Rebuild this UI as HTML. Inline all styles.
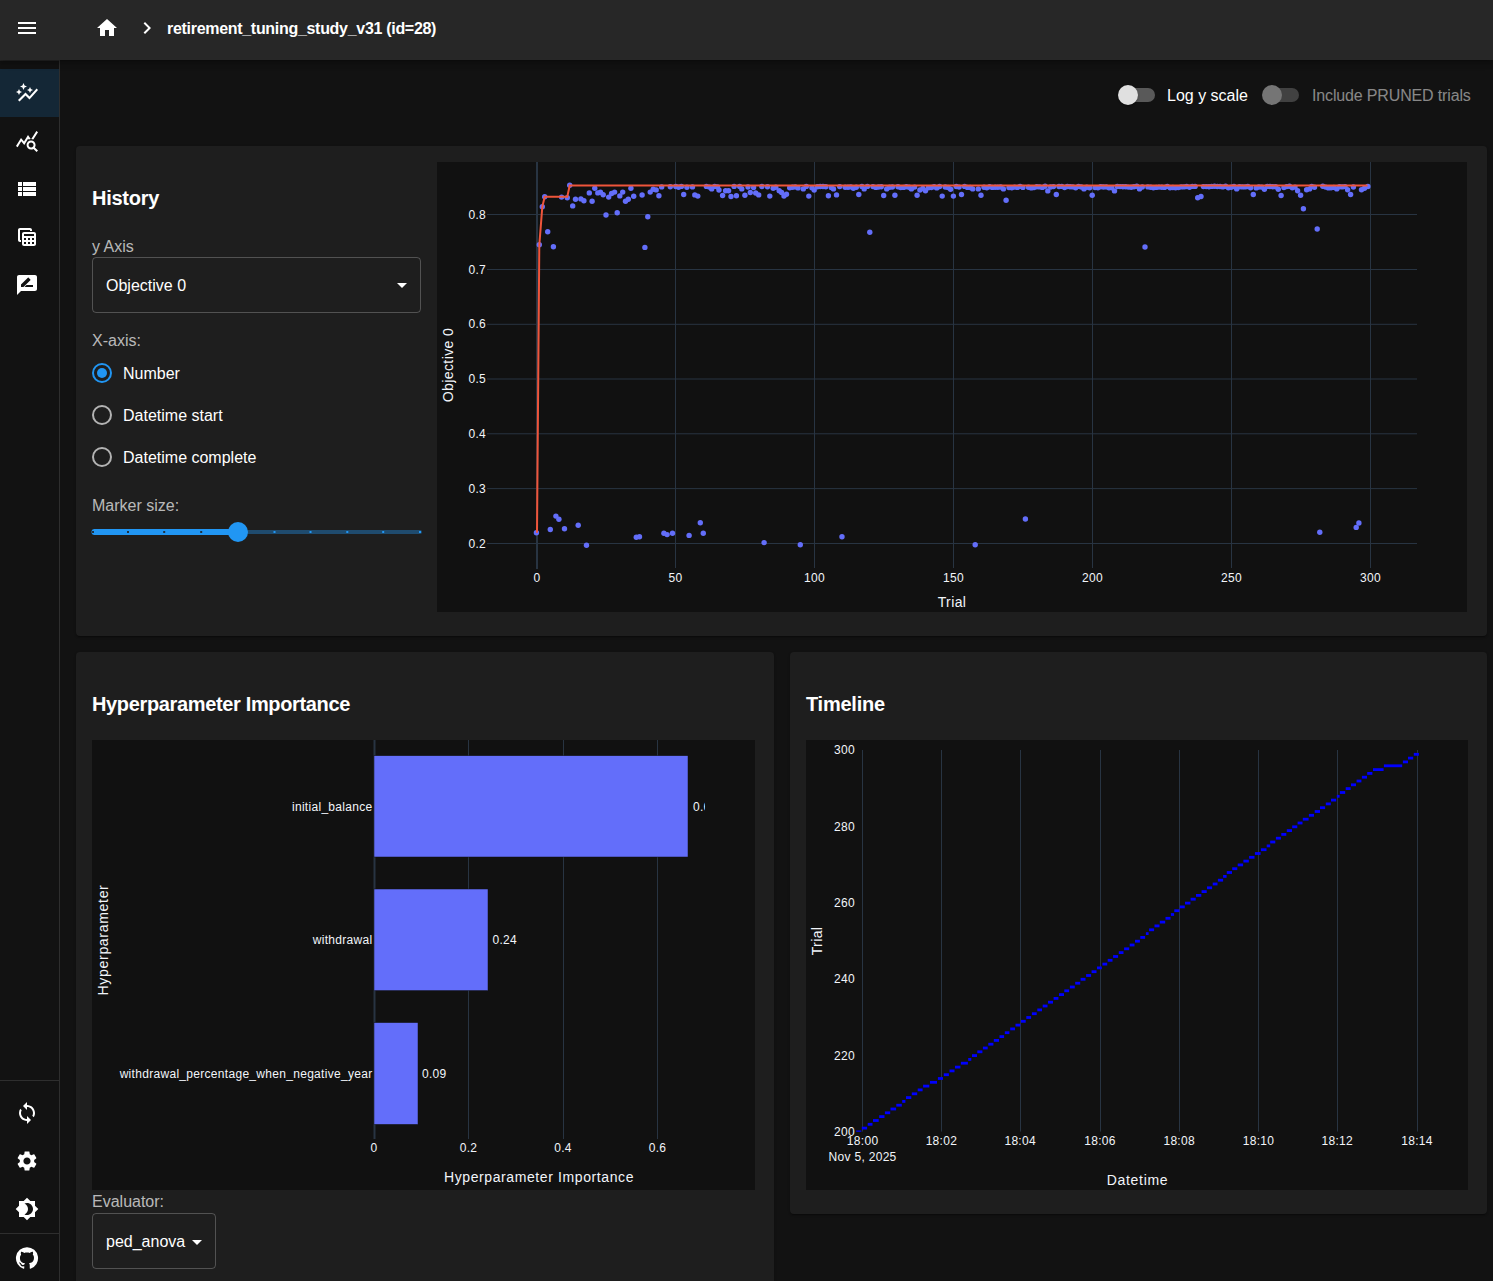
<!DOCTYPE html>
<html><head><meta charset="utf-8">
<style>
*{box-sizing:border-box}
html,body{margin:0;padding:0;width:1493px;height:1281px;overflow:hidden;background:#121212;font-family:"Liberation Sans",sans-serif;color:#fff}
.abs{position:absolute}
.appbar{position:absolute;left:0;top:0;width:1493px;height:60px;background:#272727;box-shadow:0 2px 4px -1px rgba(0,0,0,.2),0 4px 5px 0 rgba(0,0,0,.14),0 1px 10px 0 rgba(0,0,0,.12);z-index:3}
.drawer{position:absolute;left:0;top:60px;width:60px;height:1221px;background:#121212;border-right:1px solid rgba(255,255,255,0.12)}
.icon{position:absolute;width:24px;height:24px;fill:#fff}
.card{position:absolute;background:#1e1e1e;border-radius:4px;box-shadow:0 2px 1px -1px rgba(0,0,0,.2),0 1px 1px 0 rgba(0,0,0,.14),0 1px 3px 0 rgba(0,0,0,.12)}
.h6{position:absolute;font-size:20px;font-weight:700;letter-spacing:-0.25px;white-space:nowrap;line-height:24px}
.lbl{position:absolute;font-size:16px;color:rgba(255,255,255,0.7);white-space:nowrap;line-height:20px}
.txt{position:absolute;font-size:16px;color:#fff;white-space:nowrap;line-height:20px}
svg text{font-family:"Liberation Sans",sans-serif}
</style></head><body>
<!-- App bar -->
<div class="appbar">
  <svg class="icon" style="left:15px;top:16px" viewBox="0 0 24 24"><path d="M3 18h18v-2H3v2zm0-5h18v-2H3v2zm0-7v2h18V6H3z"/></svg>
  <svg class="icon" style="left:95px;top:16px" viewBox="0 0 24 24"><path d="M10 20v-6h4v6h5v-8h3L12 3 2 12h3v8z"/></svg>
  <svg class="icon" style="left:135px;top:16px" viewBox="0 0 24 24"><path d="M10 6 8.59 7.41 13.17 12l-4.58 4.59L10 18l6-6z"/></svg>
  <div class="abs" style="left:167px;top:19px;font-size:16px;font-weight:700;letter-spacing:-0.3px;line-height:20px;white-space:nowrap">retirement_tuning_study_v31 (id=28)</div>
</div>
<!-- Drawer -->
<div class="drawer">
  <div class="abs" style="left:0;top:0;width:59px;height:1px;background:#262626"></div>
  <div class="abs" style="left:0;top:9px;width:59px;height:48px;background:rgba(33,150,243,0.16)"></div>
  <svg class="icon" style="left:15px;top:21px" viewBox="0 0 24 24"><path d="M14.06 9.94 12 9l2.06-.94L15 6l.94 2.06L18 9l-2.06.94L15 12zM4 14l.94-2.06L7 11l-2.06-.94L4 8l-.94 2.06L1 11l2.06.94zm4.5-5 1.09-2.41L12 5.5 9.59 4.41 8.5 2 7.41 4.41 5 5.5l2.41 1.09zm-4 11.5 6-6.01 4 4L23 8.93l-1.41-1.41-7.09 7.97-4-4L3 19z"/></svg>
  <svg class="icon" style="left:15px;top:69px" viewBox="0 0 24 24"><path d="M19.88 18.47c.44-.7.7-1.51.7-2.39 0-2.49-2.01-4.5-4.5-4.5s-4.5 2.01-4.5 4.5 2.01 4.5 4.49 4.5c.88 0 1.7-.26 2.39-.7L21.58 23 23 21.58l-3.12-3.11zm-3.8.11c-1.38 0-2.5-1.12-2.5-2.5s1.12-2.5 2.5-2.5 2.5 1.12 2.5 2.5-1.12 2.5-2.5 2.5zm-.36-8.5c-.74.02-1.45.18-2.1.45l-.55-.83-3.8 6.18-3.01-3.52-3.630 5.81L1 17l5-8 3 3.5L13 6l2.72 4.08zm2.59.5c-.64-.28-1.33-.45-2.05-.49L21.38 2 23 3.18l-4.69 7.4z"/></svg>
  <svg class="icon" style="left:15px;top:117px" viewBox="0 0 24 24"><path d="M3 14h4v-4H3v4zm0 5h4v-4H3v4zM3 9h4V5H3v4zm5 5h13v-4H8v4zm0 5h13v-4H8v4zM8 5v4h13V5H8z"/></svg>
  <svg class="icon" style="left:15px;top:165px" viewBox="0 0 24 24"><path d="M19 7H9c-1.1 0-2 .9-2 2v10c0 1.1.9 2 2 2h10c1.1 0 2-.9 2-2V9c0-1.1-.9-2-2-2zm0 2v2H9V9h10zm-6 6v-2h2v2h-2zm2 2v2h-2v-2h2zm-4-2H9v-2h2v2zm6-2h2v2h-2v-2zm-8 4h2v2H9v-2zm8 2v-2h2v2h-2zM6 17H5c-1.1 0-2-.9-2-2V5c0-1.1.9-2 2-2h10c1.1 0 2 .9 2 2v1h-2V5H5v10h1v2z"/></svg>
  <svg class="icon" style="left:15px;top:213px" viewBox="0 0 24 24"><path d="M20 2H4c-1.1 0-1.99.9-1.99 2L2 22l4-4h14c1.1 0 2-.9 2-2V4c0-1.1-.9-2-2-2zM6 14v-2.47l6.88-6.88c.2-.2.51-.2.71 0l1.77 1.77c.2.2.2.51 0 .71L8.47 14H6zm12 0h-8.5l2-2H18v2z"/></svg>
  <div class="abs" style="left:0;top:1020px;width:59px;height:1px;background:rgba(255,255,255,0.12)"></div>
  <svg class="icon" style="left:15px;top:1041px" viewBox="0 0 24 24"><path d="M12 4V1L8 5l4 4V6c3.31 0 6 2.69 6 6 0 1.01-.25 1.97-.7 2.8l1.46 1.46C19.54 15.03 20 13.57 20 12c0-4.42-3.580-8-8-8zm0 14c-3.31 0-6-2.69-6-6 0-1.01.25-1.97.7-2.8L5.24 7.74C4.46 8.97 4 10.43 4 12c0 4.42 3.58 8 8 8v3l4-4-4-4v3z"/></svg>
  <svg class="icon" style="left:15px;top:1089px" viewBox="0 0 24 24"><path d="M19.14 12.94c.04-.3.06-.61.06-.94 0-.32-.02-.64-.07-.94l2.03-1.58c.18-.14.23-.41.12-.61l-1.92-3.32c-.12-.22-.37-.29-.59-.22l-2.39.96c-.5-.38-1.03-.7-1.62-.94l-.36-2.54c-.04-.24-.24-.41-.48-.41h-3.84c-.24 0-.43.17-.47.41l-.36 2.54c-.59.24-1.13.57-1.62.94l-2.390-.96c-.22-.08-.47 0-.59.22L2.74 8.87c-.12.21-.08.47.12.61l2.03 1.58c-.05.3-.09.63-.09.94s.02.64.07.94l-2.03 1.58c-.18.14-.23.41-.12.61l1.92 3.32c.12.22.37.29.59.22l2.39-.96c.5.38 1.03.7 1.62.94l.36 2.54c.05.24.24.41.48.41h3.84c.24 0 .44-.17.47-.41l.36-2.54c.59-.24 1.13-.56 1.62-.94l2.39.96c.22.08.47 0 .59-.22l1.92-3.32c.12-.22.07-.47-.12-.61l-2.01-1.58zM12 15.6c-1.98 0-3.6-1.62-3.6-3.6s1.62-3.6 3.6-3.6 3.6 1.62 3.6 3.6-1.62 3.6-3.6 3.6z"/></svg>
  <svg class="icon" style="left:15px;top:1137px" viewBox="0 0 24 24"><path d="M20 8.69V4h-4.69L12 .69 8.69 4H4v4.69L.69 12 4 15.31V20h4.69L12 23.31 15.31 20H20v-4.69L23.31 12 20 8.69zM12 18c-.89 0-1.74-.2-2.5-.55C11.56 16.500 13 14.42 13 12s-1.44-4.5-3.5-5.45C10.26 6.2 11.11 6 12 6c3.31 0 6 2.690 6 6s-2.69 6-6 6z"/></svg>
  <div class="abs" style="left:0;top:1173px;width:59px;height:1px;background:rgba(255,255,255,0.12)"></div>
  <svg class="icon" style="left:15px;top:1186px" viewBox="0 0 24 24"><path d="M12 1.27a11 11 0 00-3.48 21.46c.55.09.73-.28.73-.55v-1.84c-3.03.64-3.67-1.46-3.67-1.46-.55-1.29-1.28-1.65-1.28-1.65-.92-.65.1-.65.1-.65 1.1 0 1.73 1.1 1.73 1.1.92 1.65 2.57 1.2 3.21.92a2 2 0 01.64-1.47c-2.47-.27-5.04-1.19-5.04-5.5 0-1.1.46-2.1 1.2-2.84a3.76 3.76 0 010-2.93s.91-.28 3.11 1.1c1.8-.49 3.7-.49 5.5 0 2.1-1.38 3.02-1.1 3.02-1.1a3.76 3.76 0 010 2.93c.83.74 1.2 1.74 1.2 2.94 0 4.21-2.57 5.130-5.04 5.4.45.37.82.92.82 2.02v3.03c0 .27.1.64.73.55A11 11 0 0012 1.27"/></svg>
</div>

<!-- toggles -->
<div class="abs" style="left:1121px;top:88px;width:34px;height:14px;border-radius:7px;background:rgba(255,255,255,0.3)"></div>
<div class="abs" style="left:1118px;top:85px;width:20px;height:20px;border-radius:50%;background:#e0e0e0;box-shadow:0 2px 1px -1px rgba(0,0,0,.2),0 1px 1px 0 rgba(0,0,0,.14),0 1px 3px 0 rgba(0,0,0,.12)"></div>
<div class="txt" style="left:1167px;top:86px">Log y scale</div>
<div class="abs" style="left:1265px;top:88px;width:34px;height:14px;border-radius:7px;background:rgba(255,255,255,0.2)"></div>
<div class="abs" style="left:1262px;top:85px;width:20px;height:20px;border-radius:50%;background:#757575"></div>
<div class="txt" style="left:1312px;top:86px;letter-spacing:-0.15px;color:rgba(255,255,255,0.5)">Include PRUNED trials</div>

<!-- History card -->
<div class="card" style="left:76px;top:146px;width:1411px;height:490px"></div>
<div class="h6" style="left:92px;top:186px">History</div>
<div class="lbl" style="left:92px;top:237px">y Axis</div>
<div class="abs" style="left:92px;top:257px;width:329px;height:56px;border:1px solid rgba(255,255,255,0.23);border-radius:4px"></div>
<div class="txt" style="left:106px;top:276px">Objective 0</div>
<svg class="icon" style="left:390px;top:273px" viewBox="0 0 24 24"><path d="M7 10l5 5 5-5z"/></svg>
<div class="lbl" style="left:92px;top:331px">X-axis:</div>
<!-- radios -->
<svg class="abs" style="left:90px;top:361px" width="24" height="24" viewBox="0 0 24 24"><circle cx="12" cy="12" r="9" fill="none" stroke="#2196f3" stroke-width="2"/><circle cx="12" cy="12" r="5" fill="#2196f3"/></svg>
<div class="txt" style="left:123px;top:364px">Number</div>
<svg class="abs" style="left:90px;top:403px" width="24" height="24" viewBox="0 0 24 24"><circle cx="12" cy="12" r="9" fill="none" stroke="#b3b3b3" stroke-width="2"/></svg>
<div class="txt" style="left:123px;top:406px">Datetime start</div>
<svg class="abs" style="left:90px;top:445px" width="24" height="24" viewBox="0 0 24 24"><circle cx="12" cy="12" r="9" fill="none" stroke="#b3b3b3" stroke-width="2"/></svg>
<div class="txt" style="left:123px;top:448px">Datetime complete</div>
<div class="lbl" style="left:92px;top:496px">Marker size:</div>
<!-- slider -->
<svg class="abs" style="left:88px;top:520px" width="340" height="24">
  <rect x="4" y="10" width="330" height="4" rx="2" fill="#2196f3" fill-opacity="0.38"/>
  <rect x="3.5" y="9" width="147" height="6" rx="3" fill="#2196f3"/>
  <g fill="#1e1e1e" fill-opacity="0.85"><rect x="39" y="11" width="2" height="2"/><rect x="75.2" y="11" width="2" height="2"/><rect x="112.2" y="11" width="2" height="2"/><rect x="4" y="11" width="2" height="2"/></g>
  <g fill="#2196f3"><rect x="185.5" y="11" width="2" height="2"/><rect x="221.5" y="11" width="2" height="2"/><rect x="258.3" y="11" width="2" height="2"/><rect x="294.2" y="11" width="2" height="2"/><rect x="331" y="11" width="2" height="2"/></g>
  <circle cx="150" cy="12" r="10" fill="#2196f3"/>
</svg>
<!-- History plot -->
<svg class="abs" style="left:0;top:0" width="1493" height="1281">
  <rect x="437" y="162" width="1030" height="450" fill="#111111"/>
  <g stroke="#283442" stroke-width="1" fill="none">
    <path d="M487 214.5H1417M487 269.5H1417M487 324.3H1417M487 379H1417M487 433.8H1417M487 488.6H1417M487 543.5H1417"/>
    <path d="M675.5 162V568M814.5 162V568M953.5 162V568M1092.5 162V568M1231.5 162V568M1370.5 162V568"/>
  </g>
  <path d="M537 162V569" stroke="#283442" stroke-width="2"/>
  <g fill="#636efa"><circle cx="536.4" cy="532.7" r="2.7"/><circle cx="539.3" cy="244.8" r="2.7"/><circle cx="542.3" cy="206.8" r="2.7"/><circle cx="544.7" cy="196.8" r="2.7"/><circle cx="547.7" cy="231.7" r="2.7"/><circle cx="550.3" cy="529.5" r="2.7"/><circle cx="553.4" cy="246.7" r="2.7"/><circle cx="555.9" cy="516.1" r="2.7"/><circle cx="558.9" cy="519.3" r="2.7"/><circle cx="561.6" cy="197.1" r="2.7"/><circle cx="564.5" cy="528.7" r="2.7"/><circle cx="567.3" cy="197.7" r="2.7"/><circle cx="569.7" cy="185.3" r="2.7"/><circle cx="572.7" cy="205.9" r="2.7"/><circle cx="575.5" cy="199.3" r="2.7"/><circle cx="578.2" cy="525.2" r="2.7"/><circle cx="580.9" cy="198.9" r="2.7"/><circle cx="583.9" cy="200.7" r="2.7"/><circle cx="586.5" cy="545.3" r="2.7"/><circle cx="589.3" cy="192.9" r="2.7"/><circle cx="592.1" cy="201.3" r="2.7"/><circle cx="594.8" cy="188.3" r="2.7"/><circle cx="597.8" cy="192.9" r="2.7"/><circle cx="600.5" cy="192.3" r="2.7"/><circle cx="603.2" cy="194.7" r="2.7"/><circle cx="606.0" cy="215.0" r="2.7"/><circle cx="608.7" cy="197.1" r="2.7"/><circle cx="611.6" cy="193.5" r="2.7"/><circle cx="614.6" cy="192.1" r="2.7"/><circle cx="617.2" cy="212.8" r="2.7"/><circle cx="619.8" cy="195.9" r="2.7"/><circle cx="622.7" cy="192.1" r="2.7"/><circle cx="625.5" cy="201.3" r="2.7"/><circle cx="628.3" cy="199.3" r="2.7"/><circle cx="630.9" cy="188.3" r="2.7"/><circle cx="633.7" cy="196.3" r="2.7"/><circle cx="636.3" cy="537.3" r="2.7"/><circle cx="639.5" cy="536.7" r="2.7"/><circle cx="642.1" cy="195.0" r="2.7"/><circle cx="644.9" cy="247.4" r="2.7"/><circle cx="647.8" cy="216.7" r="2.7"/><circle cx="650.2" cy="192.1" r="2.7"/><circle cx="653.2" cy="189.3" r="2.7"/><circle cx="656.2" cy="189.9" r="2.7"/><circle cx="658.9" cy="195.7" r="2.7"/><circle cx="661.7" cy="186.9" r="2.7"/><circle cx="663.9" cy="533.2" r="2.7"/><circle cx="667.1" cy="534.6" r="2.7"/><circle cx="670.3" cy="186.8" r="2.7"/><circle cx="672.5" cy="533.2" r="2.7"/><circle cx="675.8" cy="186.5" r="2.7"/><circle cx="678.6" cy="187.3" r="2.7"/><circle cx="681.4" cy="186.4" r="2.7"/><circle cx="683.7" cy="194.5" r="2.7"/><circle cx="686.9" cy="187.2" r="2.7"/><circle cx="689.1" cy="535.4" r="2.7"/><circle cx="692.5" cy="186.9" r="2.7"/><circle cx="694.8" cy="194.9" r="2.7"/><circle cx="697.8" cy="196.1" r="2.7"/><circle cx="700.3" cy="522.8" r="2.7"/><circle cx="703.3" cy="533.2" r="2.7"/><circle cx="706.4" cy="186.4" r="2.7"/><circle cx="709.2" cy="187.1" r="2.7"/><circle cx="711.7" cy="188.9" r="2.7"/><circle cx="714.7" cy="186.4" r="2.7"/><circle cx="717.5" cy="187.0" r="2.7"/><circle cx="719.0" cy="190.0" r="2.7"/><circle cx="722.6" cy="195.5" r="2.7"/><circle cx="725.6" cy="190.7" r="2.7"/><circle cx="728.6" cy="190.7" r="2.7"/><circle cx="731.0" cy="196.5" r="2.7"/><circle cx="734.1" cy="186.4" r="2.7"/><circle cx="736.4" cy="195.7" r="2.7"/><circle cx="739.7" cy="186.4" r="2.7"/><circle cx="741.8" cy="188.9" r="2.7"/><circle cx="744.9" cy="195.3" r="2.7"/><circle cx="748.0" cy="187.0" r="2.7"/><circle cx="750.3" cy="192.5" r="2.7"/><circle cx="753.6" cy="187.6" r="2.7"/><circle cx="755.7" cy="193.0" r="2.7"/><circle cx="758.7" cy="194.9" r="2.7"/><circle cx="761.9" cy="186.5" r="2.7"/><circle cx="764.1" cy="542.6" r="2.7"/><circle cx="767.5" cy="186.7" r="2.7"/><circle cx="769.8" cy="196.1" r="2.7"/><circle cx="773.2" cy="188.3" r="2.7"/><circle cx="775.8" cy="187.3" r="2.7"/><circle cx="779.2" cy="190.7" r="2.7"/><circle cx="781.6" cy="192.5" r="2.7"/><circle cx="784.0" cy="196.1" r="2.7"/><circle cx="786.5" cy="194.3" r="2.7"/><circle cx="789.7" cy="187.8" r="2.7"/><circle cx="792.5" cy="187.2" r="2.7"/><circle cx="795.2" cy="186.9" r="2.7"/><circle cx="798.0" cy="187.9" r="2.7"/><circle cx="800.3" cy="544.8" r="2.7"/><circle cx="803.3" cy="188.9" r="2.7"/><circle cx="806.3" cy="186.4" r="2.7"/><circle cx="808.8" cy="196.1" r="2.7"/><circle cx="811.9" cy="187.7" r="2.7"/><circle cx="814.2" cy="190.0" r="2.7"/><circle cx="817.4" cy="186.8" r="2.7"/><circle cx="820.2" cy="186.5" r="2.7"/><circle cx="823.0" cy="186.5" r="2.7"/><circle cx="825.8" cy="186.8" r="2.7"/><circle cx="828.4" cy="195.7" r="2.7"/><circle cx="831.3" cy="187.6" r="2.7"/><circle cx="833.5" cy="188.9" r="2.7"/><circle cx="836.5" cy="194.9" r="2.7"/><circle cx="839.7" cy="186.6" r="2.7"/><circle cx="842.0" cy="536.7" r="2.7"/><circle cx="845.2" cy="187.2" r="2.7"/><circle cx="848.0" cy="187.3" r="2.7"/><circle cx="850.8" cy="186.9" r="2.7"/><circle cx="853.4" cy="188.3" r="2.7"/><circle cx="856.3" cy="187.2" r="2.7"/><circle cx="858.8" cy="194.5" r="2.7"/><circle cx="861.9" cy="186.4" r="2.7"/><circle cx="864.2" cy="188.9" r="2.7"/><circle cx="867.4" cy="186.4" r="2.7"/><circle cx="869.8" cy="232.3" r="2.7"/><circle cx="873.0" cy="186.6" r="2.7"/><circle cx="875.8" cy="187.4" r="2.7"/><circle cx="878.5" cy="187.0" r="2.7"/><circle cx="881.3" cy="186.8" r="2.7"/><circle cx="883.7" cy="195.5" r="2.7"/><circle cx="886.7" cy="188.9" r="2.7"/><circle cx="889.6" cy="187.2" r="2.7"/><circle cx="892.4" cy="187.0" r="2.7"/><circle cx="894.9" cy="195.3" r="2.7"/><circle cx="898.0" cy="186.8" r="2.7"/><circle cx="900.7" cy="187.6" r="2.7"/><circle cx="903.5" cy="187.4" r="2.7"/><circle cx="906.3" cy="186.7" r="2.7"/><circle cx="909.1" cy="187.2" r="2.7"/><circle cx="911.4" cy="188.9" r="2.7"/><circle cx="914.6" cy="187.1" r="2.7"/><circle cx="917.1" cy="195.3" r="2.7"/><circle cx="919.9" cy="190.0" r="2.7"/><circle cx="922.9" cy="188.5" r="2.7"/><circle cx="925.5" cy="190.7" r="2.7"/><circle cx="928.5" cy="187.7" r="2.7"/><circle cx="931.3" cy="187.5" r="2.7"/><circle cx="934.1" cy="186.8" r="2.7"/><circle cx="936.8" cy="187.9" r="2.7"/><circle cx="939.6" cy="186.5" r="2.7"/><circle cx="942.2" cy="196.1" r="2.7"/><circle cx="945.2" cy="187.0" r="2.7"/><circle cx="948.0" cy="187.5" r="2.7"/><circle cx="950.6" cy="189.2" r="2.7"/><circle cx="953.4" cy="196.1" r="2.7"/><circle cx="956.3" cy="186.5" r="2.7"/><circle cx="959.1" cy="187.1" r="2.7"/><circle cx="961.5" cy="194.5" r="2.7"/><circle cx="964.6" cy="186.4" r="2.7"/><circle cx="967.4" cy="187.4" r="2.7"/><circle cx="970.2" cy="187.5" r="2.7"/><circle cx="972.7" cy="188.9" r="2.7"/><circle cx="975.2" cy="544.7" r="2.7"/><circle cx="978.3" cy="188.9" r="2.7"/><circle cx="981.0" cy="195.3" r="2.7"/><circle cx="984.0" cy="187.2" r="2.7"/><circle cx="986.8" cy="187.7" r="2.7"/><circle cx="989.6" cy="186.8" r="2.7"/><circle cx="992.4" cy="187.4" r="2.7"/><circle cx="995.2" cy="187.3" r="2.7"/><circle cx="997.9" cy="187.2" r="2.7"/><circle cx="1000.7" cy="187.0" r="2.7"/><circle cx="1003.4" cy="188.9" r="2.7"/><circle cx="1006.1" cy="200.3" r="2.7"/><circle cx="1009.0" cy="187.6" r="2.7"/><circle cx="1011.8" cy="187.8" r="2.7"/><circle cx="1014.6" cy="187.1" r="2.7"/><circle cx="1017.4" cy="187.4" r="2.7"/><circle cx="1020.1" cy="186.4" r="2.7"/><circle cx="1022.9" cy="187.4" r="2.7"/><circle cx="1025.4" cy="519.0" r="2.7"/><circle cx="1028.5" cy="187.3" r="2.7"/><circle cx="1031.3" cy="187.9" r="2.7"/><circle cx="1034.0" cy="187.6" r="2.7"/><circle cx="1036.8" cy="186.8" r="2.7"/><circle cx="1039.6" cy="186.9" r="2.7"/><circle cx="1042.4" cy="187.4" r="2.7"/><circle cx="1045.1" cy="186.3" r="2.7"/><circle cx="1047.8" cy="190.9" r="2.7"/><circle cx="1050.7" cy="187.0" r="2.7"/><circle cx="1053.5" cy="186.6" r="2.7"/><circle cx="1056.3" cy="194.5" r="2.7"/><circle cx="1059.0" cy="186.5" r="2.7"/><circle cx="1061.8" cy="186.4" r="2.7"/><circle cx="1064.6" cy="187.5" r="2.7"/><circle cx="1067.3" cy="186.5" r="2.7"/><circle cx="1070.1" cy="186.7" r="2.7"/><circle cx="1072.9" cy="186.9" r="2.7"/><circle cx="1075.7" cy="187.7" r="2.7"/><circle cx="1078.5" cy="186.4" r="2.7"/><circle cx="1081.2" cy="187.0" r="2.7"/><circle cx="1084.0" cy="188.9" r="2.7"/><circle cx="1086.8" cy="187.2" r="2.7"/><circle cx="1089.6" cy="187.7" r="2.7"/><circle cx="1092.2" cy="195.3" r="2.7"/><circle cx="1095.1" cy="187.6" r="2.7"/><circle cx="1097.9" cy="187.7" r="2.7"/><circle cx="1100.7" cy="186.7" r="2.7"/><circle cx="1103.4" cy="187.0" r="2.7"/><circle cx="1106.2" cy="186.9" r="2.7"/><circle cx="1109.0" cy="187.7" r="2.7"/><circle cx="1111.8" cy="187.8" r="2.7"/><circle cx="1114.5" cy="190.9" r="2.7"/><circle cx="1117.3" cy="186.5" r="2.7"/><circle cx="1120.1" cy="186.6" r="2.7"/><circle cx="1122.9" cy="186.7" r="2.7"/><circle cx="1125.7" cy="186.7" r="2.7"/><circle cx="1128.4" cy="187.1" r="2.7"/><circle cx="1131.2" cy="187.2" r="2.7"/><circle cx="1134.0" cy="186.7" r="2.7"/><circle cx="1136.8" cy="186.3" r="2.7"/><circle cx="1139.5" cy="188.9" r="2.7"/><circle cx="1142.3" cy="187.0" r="2.7"/><circle cx="1145.0" cy="247.0" r="2.7"/><circle cx="1147.9" cy="186.9" r="2.7"/><circle cx="1150.7" cy="187.2" r="2.7"/><circle cx="1153.4" cy="187.8" r="2.7"/><circle cx="1156.2" cy="187.4" r="2.7"/><circle cx="1159.0" cy="187.1" r="2.7"/><circle cx="1161.8" cy="187.3" r="2.7"/><circle cx="1164.5" cy="187.4" r="2.7"/><circle cx="1167.3" cy="186.4" r="2.7"/><circle cx="1170.1" cy="187.7" r="2.7"/><circle cx="1172.9" cy="187.5" r="2.7"/><circle cx="1175.6" cy="187.7" r="2.7"/><circle cx="1178.4" cy="187.6" r="2.7"/><circle cx="1181.2" cy="186.9" r="2.7"/><circle cx="1184.0" cy="186.9" r="2.7"/><circle cx="1186.7" cy="186.5" r="2.7"/><circle cx="1189.5" cy="187.3" r="2.7"/><circle cx="1192.3" cy="186.4" r="2.7"/><circle cx="1195.1" cy="186.4" r="2.7"/><circle cx="1197.7" cy="197.7" r="2.7"/><circle cx="1201.0" cy="196.5" r="2.7"/><circle cx="1203.4" cy="186.6" r="2.7"/><circle cx="1206.2" cy="186.6" r="2.7"/><circle cx="1209.0" cy="186.8" r="2.7"/><circle cx="1211.7" cy="186.4" r="2.7"/><circle cx="1214.5" cy="186.3" r="2.7"/><circle cx="1217.3" cy="186.5" r="2.7"/><circle cx="1220.1" cy="186.5" r="2.7"/><circle cx="1222.8" cy="186.9" r="2.7"/><circle cx="1225.6" cy="186.3" r="2.7"/><circle cx="1228.4" cy="187.7" r="2.7"/><circle cx="1231.2" cy="187.3" r="2.7"/><circle cx="1234.0" cy="186.5" r="2.7"/><circle cx="1236.7" cy="188.9" r="2.7"/><circle cx="1239.5" cy="186.7" r="2.7"/><circle cx="1242.3" cy="186.9" r="2.7"/><circle cx="1245.1" cy="186.9" r="2.7"/><circle cx="1247.8" cy="186.5" r="2.7"/><circle cx="1250.6" cy="187.7" r="2.7"/><circle cx="1253.3" cy="194.5" r="2.7"/><circle cx="1256.2" cy="187.9" r="2.7"/><circle cx="1258.9" cy="187.0" r="2.7"/><circle cx="1261.7" cy="187.1" r="2.7"/><circle cx="1264.4" cy="189.2" r="2.7"/><circle cx="1267.3" cy="186.4" r="2.7"/><circle cx="1270.0" cy="186.5" r="2.7"/><circle cx="1272.8" cy="186.8" r="2.7"/><circle cx="1275.6" cy="186.7" r="2.7"/><circle cx="1278.3" cy="189.2" r="2.7"/><circle cx="1281.1" cy="195.5" r="2.7"/><circle cx="1283.9" cy="187.6" r="2.7"/><circle cx="1286.7" cy="186.6" r="2.7"/><circle cx="1289.5" cy="186.3" r="2.7"/><circle cx="1292.3" cy="187.8" r="2.7"/><circle cx="1295.0" cy="187.1" r="2.7"/><circle cx="1297.6" cy="190.7" r="2.7"/><circle cx="1300.6" cy="195.3" r="2.7"/><circle cx="1303.4" cy="208.8" r="2.7"/><circle cx="1306.6" cy="189.7" r="2.7"/><circle cx="1309.6" cy="188.9" r="2.7"/><circle cx="1311.7" cy="186.5" r="2.7"/><circle cx="1314.5" cy="187.2" r="2.7"/><circle cx="1317.2" cy="229.0" r="2.7"/><circle cx="1319.8" cy="532.3" r="2.7"/><circle cx="1322.8" cy="186.3" r="2.7"/><circle cx="1325.6" cy="187.1" r="2.7"/><circle cx="1328.4" cy="187.9" r="2.7"/><circle cx="1331.1" cy="187.7" r="2.7"/><circle cx="1333.9" cy="187.4" r="2.7"/><circle cx="1336.8" cy="188.9" r="2.7"/><circle cx="1339.5" cy="186.7" r="2.7"/><circle cx="1342.2" cy="186.9" r="2.7"/><circle cx="1345.0" cy="186.6" r="2.7"/><circle cx="1347.6" cy="189.7" r="2.7"/><circle cx="1350.6" cy="194.5" r="2.7"/><circle cx="1353.4" cy="187.0" r="2.7"/><circle cx="1356.2" cy="527.4" r="2.7"/><circle cx="1358.9" cy="523.0" r="2.7"/><circle cx="1361.5" cy="189.7" r="2.7"/><circle cx="1364.5" cy="188.3" r="2.7"/><circle cx="1367.9" cy="186.5" r="2.7"/></g>
  <polyline points="537,532.7 539.3,244.8 542.3,206.8 544.7,196.8 567.3,196.8 569.7,185.5 1367.5,185.5" fill="none" stroke="#ef553b" stroke-width="2"/>
  <g fill="#f2f5fa" font-size="12" letter-spacing="0.3" text-anchor="end">
    <text x="486" y="218.5">0.8</text><text x="486" y="273.5">0.7</text><text x="486" y="328.3">0.6</text><text x="486" y="383">0.5</text><text x="486" y="437.5">0.4</text><text x="486" y="492.5">0.3</text><text x="486" y="547.5">0.2</text>
  </g>
  <g fill="#f2f5fa" font-size="12" letter-spacing="0.3" text-anchor="middle">
    <text x="537" y="582">0</text><text x="675.5" y="582">50</text><text x="814.5" y="582">100</text><text x="953.5" y="582">150</text><text x="1092.5" y="582">200</text><text x="1231.5" y="582">250</text><text x="1370.5" y="582">300</text>
  </g>
  <text x="952" y="607" fill="#f2f5fa" font-size="14" letter-spacing="0.4" text-anchor="middle">Trial</text>
  <text transform="translate(453,365) rotate(-90)" fill="#f2f5fa" font-size="14" letter-spacing="0.4" text-anchor="middle">Objective 0</text>
</svg>

<!-- Hyperparameter importance card -->
<div class="card" style="left:76px;top:652px;width:698px;height:650px"></div>
<div class="h6" style="left:92px;top:692px;letter-spacing:-0.35px">Hyperparameter Importance</div>
<svg class="abs" style="left:0;top:0" width="1493" height="1281">
  <rect x="92" y="740" width="663" height="450" fill="#111111"/>
  <g stroke="#283442" stroke-width="1"><path d="M468.5 740V1139M563.5 740V1139M657.5 740V1139"/></g>
  <path d="M374.5 740V1139" stroke="#283442" stroke-width="2"/>
  <g fill="#636efa" stroke="#111111" stroke-width="0.5">
    <rect x="374" y="755.7" width="314" height="101.3"/>
    <rect x="374" y="889" width="114" height="101.6"/>
    <rect x="374" y="1022.6" width="44" height="101.8"/>
  </g>
  <g fill="#f2f5fa" font-size="12" letter-spacing="0.3" text-anchor="end">
    <text x="372.5" y="811">initial_balance</text>
    <text x="372.5" y="944">withdrawal</text>
    <text x="372.5" y="1078">withdrawal_percentage_when_negative_year</text>
  </g>
  <clipPath id="cp1"><rect x="374" y="740" width="331" height="400"/></clipPath>
  <g fill="#f2f5fa" font-size="12" letter-spacing="0.3" clip-path="url(#cp1)">
    <text x="693" y="811">0.66</text>
    <text x="492.5" y="944">0.24</text>
    <text x="422" y="1078">0.09</text>
  </g>
  <g fill="#f2f5fa" font-size="12" letter-spacing="0.3" text-anchor="middle">
    <text x="374" y="1152">0</text><text x="468.5" y="1152">0.2</text><text x="563" y="1152">0.4</text><text x="657.5" y="1152">0.6</text>
  </g>
  <text x="539" y="1182" fill="#f2f5fa" font-size="14" letter-spacing="0.6" text-anchor="middle">Hyperparameter Importance</text>
  <text transform="translate(108,940) rotate(-90)" fill="#f2f5fa" font-size="14" letter-spacing="0.7" text-anchor="middle">Hyperparameter</text>
</svg>
<div class="lbl" style="left:92px;top:1192px">Evaluator:</div>
<div class="abs" style="left:92px;top:1213px;width:124px;height:56px;border:1px solid rgba(255,255,255,0.23);border-radius:4px"></div>
<div class="txt" style="left:106px;top:1232px">ped_anova</div>
<svg class="icon" style="left:185px;top:1230px" viewBox="0 0 24 24"><path d="M7 10l5 5 5-5z"/></svg>

<!-- Timeline card -->
<div class="card" style="left:790px;top:652px;width:697px;height:562px"></div>
<div class="h6" style="left:806px;top:692px">Timeline</div>
<svg class="abs" style="left:0;top:0" width="1493" height="1281">
  <rect x="806" y="740" width="662" height="450" fill="#111111"/>
  <g stroke="#283442" stroke-width="1"><path d="M862.5 750V1131.6M941.5 750V1131.6M1020.5 750V1131.6M1100.5 750V1131.6M1179.5 750V1131.6M1258.5 750V1131.6M1337.5 750V1131.6M1417.5 750V1131.6"/></g>
  <clipPath id="cp2"><rect x="855" y="745" width="600" height="386.8"/></clipPath>
  <g fill="#0000ff" clip-path="url(#cp2)"><rect x="856.2" y="1130.5" width="5.1" height="2.8"/><rect x="861.8" y="1126.7" width="5.3" height="2.8"/><rect x="867.7" y="1122.9" width="4.8" height="2.8"/><rect x="873.0" y="1119.1" width="5.7" height="2.8"/><rect x="879.2" y="1115.2" width="5.3" height="2.8"/><rect x="884.9" y="1111.4" width="5.3" height="2.8"/><rect x="890.5" y="1107.6" width="5.6" height="2.8"/><rect x="896.3" y="1103.8" width="5.5" height="2.8"/><rect x="902.2" y="1100.0" width="3.2" height="2.8"/><rect x="906.0" y="1096.2" width="5.3" height="2.8"/><rect x="911.8" y="1092.4" width="5.4" height="2.8"/><rect x="917.7" y="1088.5" width="4.9" height="2.8"/><rect x="923.1" y="1084.7" width="6.2" height="2.8"/><rect x="930.0" y="1080.9" width="7.0" height="2.8"/><rect x="937.9" y="1077.1" width="5.1" height="2.8"/><rect x="943.8" y="1073.3" width="5.1" height="2.8"/><rect x="949.5" y="1069.5" width="5.0" height="2.8"/><rect x="955.0" y="1065.7" width="5.4" height="2.8"/><rect x="960.9" y="1061.8" width="7.0" height="2.8"/><rect x="968.2" y="1058.0" width="3.1" height="2.8"/><rect x="972.0" y="1054.2" width="5.0" height="2.8"/><rect x="977.3" y="1050.4" width="5.1" height="2.8"/><rect x="982.9" y="1046.6" width="4.8" height="2.8"/><rect x="988.3" y="1042.8" width="5.1" height="2.8"/><rect x="993.8" y="1039.0" width="5.2" height="2.8"/><rect x="999.5" y="1035.2" width="4.6" height="2.8"/><rect x="1004.8" y="1031.3" width="4.6" height="2.8"/><rect x="1010.2" y="1027.5" width="4.8" height="2.8"/><rect x="1015.5" y="1023.7" width="4.9" height="2.8"/><rect x="1020.9" y="1019.9" width="4.8" height="2.8"/><rect x="1026.3" y="1016.1" width="4.8" height="2.8"/><rect x="1031.9" y="1012.3" width="4.8" height="2.8"/><rect x="1037.3" y="1008.5" width="4.7" height="2.8"/><rect x="1042.7" y="1004.6" width="4.8" height="2.8"/><rect x="1048.0" y="1000.8" width="5.0" height="2.8"/><rect x="1053.6" y="997.0" width="4.8" height="2.8"/><rect x="1059.0" y="993.2" width="5.0" height="2.8"/><rect x="1064.3" y="989.4" width="4.8" height="2.8"/><rect x="1069.9" y="985.6" width="4.9" height="2.8"/><rect x="1075.2" y="981.8" width="5.0" height="2.8"/><rect x="1080.6" y="977.9" width="4.9" height="2.8"/><rect x="1086.1" y="974.1" width="5.0" height="2.8"/><rect x="1091.6" y="970.3" width="4.9" height="2.8"/><rect x="1097.0" y="966.5" width="4.8" height="2.8"/><rect x="1102.4" y="962.7" width="4.8" height="2.8"/><rect x="1107.7" y="958.9" width="4.8" height="2.8"/><rect x="1113.1" y="955.1" width="5.0" height="2.8"/><rect x="1118.8" y="951.2" width="4.7" height="2.8"/><rect x="1124.1" y="947.4" width="5.1" height="2.8"/><rect x="1129.7" y="943.6" width="4.8" height="2.8"/><rect x="1135.0" y="939.8" width="4.9" height="2.8"/><rect x="1140.3" y="936.0" width="4.8" height="2.8"/><rect x="1145.9" y="932.2" width="2.7" height="2.8"/><rect x="1149.1" y="928.4" width="5.0" height="2.8"/><rect x="1154.5" y="924.5" width="5.0" height="2.8"/><rect x="1159.8" y="920.7" width="5.4" height="2.8"/><rect x="1165.5" y="916.9" width="5.0" height="2.8"/><rect x="1170.9" y="913.1" width="3.2" height="2.8"/><rect x="1174.3" y="909.3" width="5.1" height="2.8"/><rect x="1179.7" y="905.5" width="5.1" height="2.8"/><rect x="1185.0" y="901.7" width="5.4" height="2.8"/><rect x="1190.6" y="897.8" width="5.1" height="2.8"/><rect x="1196.0" y="894.0" width="5.3" height="2.8"/><rect x="1201.6" y="890.2" width="5.1" height="2.8"/><rect x="1207.0" y="886.4" width="5.1" height="2.8"/><rect x="1212.7" y="882.6" width="4.8" height="2.8"/><rect x="1217.9" y="878.8" width="5.2" height="2.8"/><rect x="1223.1" y="875.0" width="3.5" height="2.8"/><rect x="1226.8" y="871.1" width="5.2" height="2.8"/><rect x="1232.2" y="867.3" width="5.1" height="2.8"/><rect x="1237.7" y="863.5" width="5.4" height="2.8"/><rect x="1243.4" y="859.7" width="5.4" height="2.8"/><rect x="1249.1" y="855.9" width="5.4" height="2.8"/><rect x="1254.9" y="852.1" width="5.7" height="2.8"/><rect x="1260.9" y="848.3" width="5.6" height="2.8"/><rect x="1266.7" y="844.5" width="3.5" height="2.8"/><rect x="1270.2" y="840.6" width="5.1" height="2.8"/><rect x="1275.9" y="836.8" width="5.0" height="2.8"/><rect x="1281.3" y="833.0" width="5.0" height="2.8"/><rect x="1286.8" y="829.2" width="5.2" height="2.8"/><rect x="1292.2" y="825.4" width="5.1" height="2.8"/><rect x="1297.6" y="821.6" width="4.9" height="2.8"/><rect x="1302.8" y="817.8" width="5.8" height="2.8"/><rect x="1308.9" y="813.9" width="5.1" height="2.8"/><rect x="1314.7" y="810.1" width="5.3" height="2.8"/><rect x="1320.0" y="806.3" width="5.1" height="2.8"/><rect x="1325.8" y="802.5" width="5.0" height="2.8"/><rect x="1331.0" y="798.7" width="5.2" height="2.8"/><rect x="1336.8" y="794.9" width="2.8" height="2.8"/><rect x="1339.9" y="791.1" width="5.3" height="2.8"/><rect x="1345.7" y="787.2" width="4.9" height="2.8"/><rect x="1351.0" y="783.4" width="5.0" height="2.8"/><rect x="1356.6" y="779.6" width="4.8" height="2.8"/><rect x="1361.9" y="775.8" width="5.1" height="2.8"/><rect x="1367.2" y="772.0" width="5.2" height="2.8"/><rect x="1373.0" y="768.2" width="10.6" height="2.8"/><rect x="1383.9" y="764.4" width="18.3" height="2.8"/><rect x="1402.9" y="760.5" width="5.1" height="2.8"/><rect x="1408.0" y="756.7" width="5.2" height="2.8"/><rect x="1413.8" y="752.9" width="5.1" height="2.8"/></g>
  <g fill="#f2f5fa" font-size="12" letter-spacing="0.3" text-anchor="end">
    <text x="855" y="754">300</text><text x="855" y="831">280</text><text x="855" y="907">260</text><text x="855" y="983">240</text><text x="855" y="1060">220</text><text x="855" y="1136">200</text>
  </g>
  <g fill="#f2f5fa" font-size="12" letter-spacing="0.3" text-anchor="middle">
    <text x="862.6" y="1145">18:00</text><text x="941.4" y="1145">18:02</text><text x="1020.2" y="1145">18:04</text><text x="1100" y="1145">18:06</text><text x="1179.2" y="1145">18:08</text><text x="1258.5" y="1145">18:10</text><text x="1337.3" y="1145">18:12</text><text x="1417" y="1145">18:14</text>
    <text x="862.6" y="1161">Nov 5, 2025</text>
  </g>
  <text x="1137.5" y="1185" fill="#f2f5fa" font-size="14" letter-spacing="0.7" text-anchor="middle">Datetime</text>
  <text transform="translate(822,941) rotate(-90)" fill="#f2f5fa" font-size="14" letter-spacing="0.4" text-anchor="middle">Trial</text>
</svg>
</body></html>
